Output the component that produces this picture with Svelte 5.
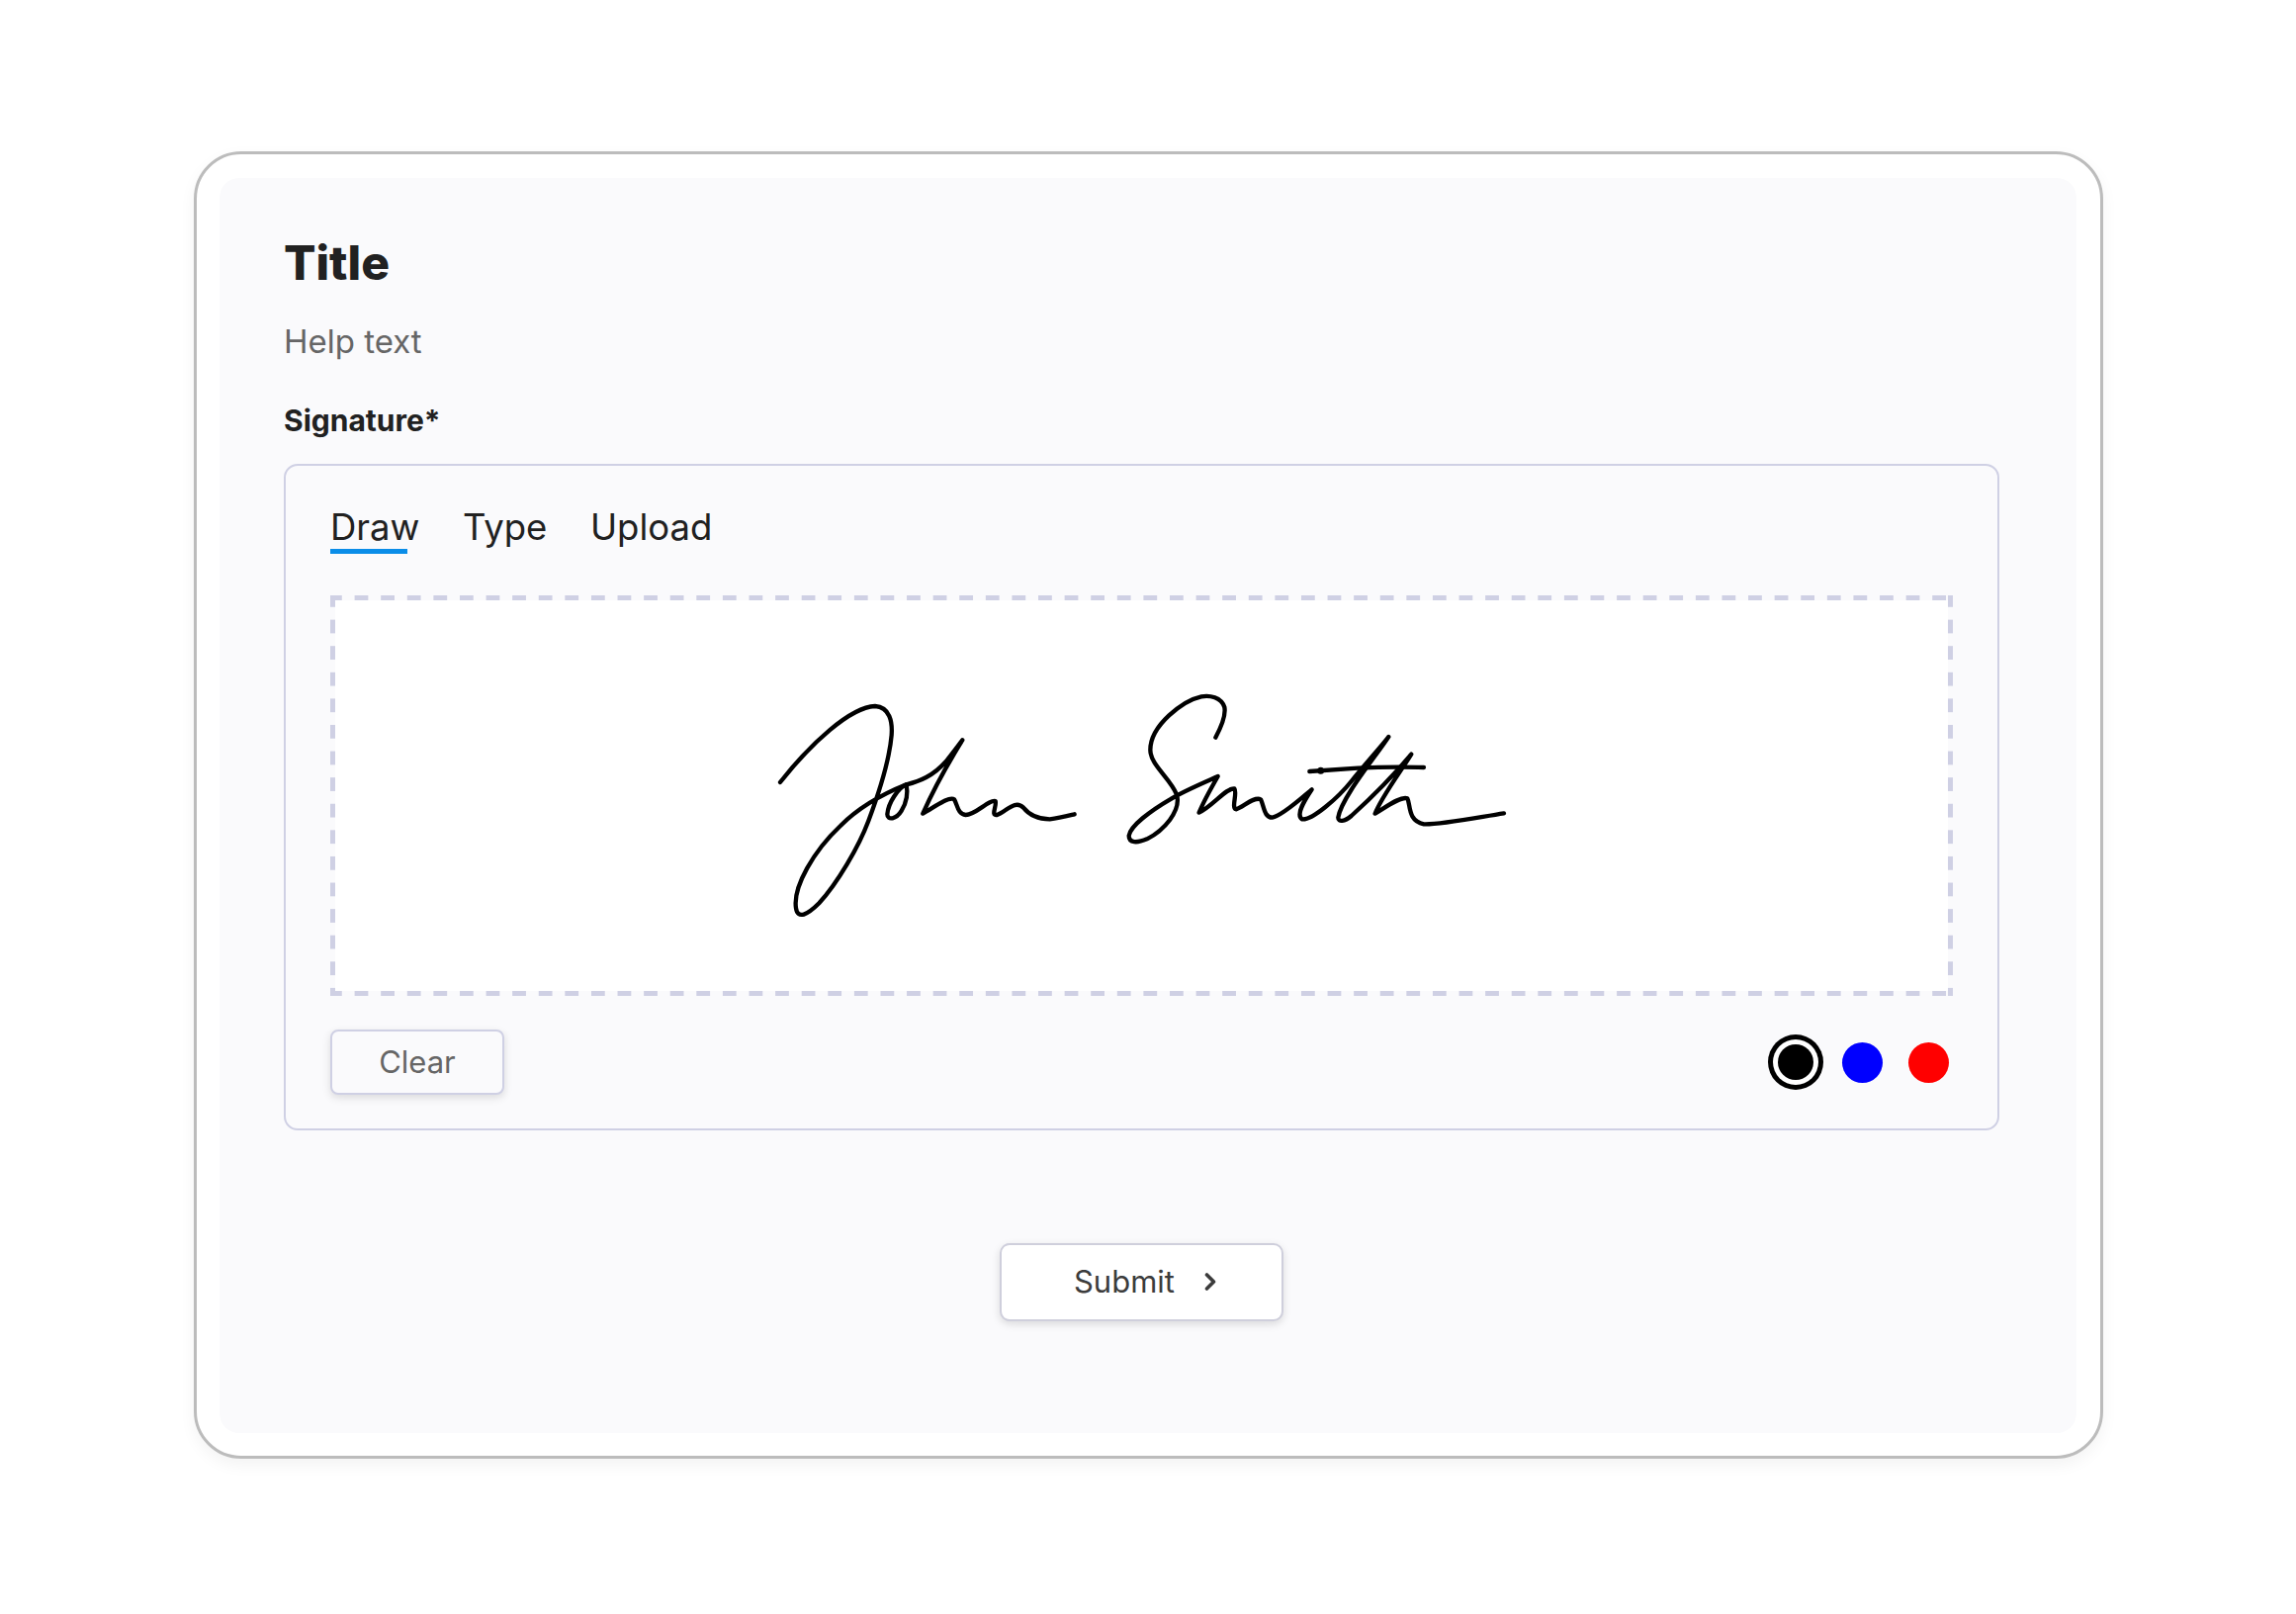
<script>
    const tabs = ["Draw", "Type", "Upload"];
    const colors = ["#000000", "#0000ff", "#ff0000"];

    let activeTab = $state("Draw");
    let ink = $state("#000000");
</script>

<div class="page">
    <div class="frame">
        <div class="panel">
            <h1>Title</h1>
            <p class="help">Help text</p>
            <div class="label">Signature*</div>

            <div class="box">
                <div class="tabs">
                    {#each tabs as tab}
                        <button class="tab" class:active={activeTab === tab} onclick={() => (activeTab = tab)}>{tab}</button>
                    {/each}
                </div>

                <div class="dashed">
                    <div class="canvas">
                        <svg viewBox="339 607 1631 395" fill="none" stroke={ink} stroke-width="13" stroke-linecap="round" stroke-linejoin="round">
                            <g transform="translate(760 680) scale(.3333)">
                                <path d="M87 333C180 215 300 105 375 102C420 105 428 150 425 190C418 270 385 370 355 450C325 530 260 640 205 700C170 735 140 750 135 715C125 650 190 540 270 465C340 395 420 360 470 340C510 330 550 315 590 270C610 245 625 225 640 205C600 270 550 360 520 428C560 405 600 375 615 385C625 400 625 430 650 432C680 432 720 385 740 390C745 405 725 435 745 432C775 420 800 385 825 410C845 435 870 445 905 445C935 442 960 435 980 430"/>
                                <path d="M470 340C445 350 415 395 412 430C412 450 440 445 455 420C470 395 475 365 470 340"/>
                            </g>
                            <g transform="translate(1140 680) scale(.3333)">
                                <path d="M268 197C285 165 300 130 295 105C285 75 250 68 225 73C170 85 70 160 70 235C70 280 130 320 150 370C165 420 110 480 60 505C30 518 5 518 5 495C10 465 70 420 130 385C170 360 230 335 275 315C255 350 230 395 218 425C260 405 300 350 325 352C335 365 315 410 330 415C350 410 385 375 405 385C415 405 415 440 440 440C470 435 530 380 560 355C540 385 510 430 530 445C560 450 640 380 680 330C720 280 770 225 793 195C750 260 650 380 640 440C640 455 660 452 680 435C730 390 810 310 862 248C830 300 770 380 752 428C790 405 830 375 850 382C860 400 850 450 900 460C950 462 1060 440 1143 427"/>
                                <path d="M553 300L700 290C800 285 850 287 900 288"/>
                                <circle cx="587" cy="298" r="4"/>
                            </g>
                        </svg>
                    </div>
                </div>

                <div class="controls">
                    <button class="clear">Clear</button>
                    <div class="swatches">
                        {#each colors as color}
                            <button class="swatch" class:selected={ink === color} style="background: {color}" aria-label={color} onclick={() => (ink = color)}></button>
                        {/each}
                    </div>
                </div>
            </div>

            <div class="actions">
                <button class="submit">
                    Submit
                    <svg width="12" height="18" viewBox="0 0 12 18" fill="none" stroke="#3c3c3c" stroke-width="3.6" stroke-linecap="round" stroke-linejoin="round">
                        <path d="M2.5 2L9.5 9L2.5 16"/>
                    </svg>
                </button>
            </div>
        </div>
    </div>
</div>

<style>
    :global(body) {
        margin: 0;
        background: #fff;
    }

    .page {
        height: 1632px;
        padding: 153px 0 0 196px;
        box-sizing: border-box;
        font-family: Inter, "Noto Sans", sans-serif;
    }

    .frame {
        width: 1931px;
        height: 1322px;
        box-sizing: border-box;
        padding: 24px 24px 23px 23px;
        border: 3px solid #bcbcbc;
        border-radius: 48px;
        background: #fff;
        box-shadow: 0 6px 16px rgba(0, 0, 0, 0.05);
    }

    .panel {
        height: 100%;
        box-sizing: border-box;
        padding: 56px 78px 0 65px;
        border-radius: 20px;
        background: #fafafc;
    }

    h1 {
        margin: 0;
        font-size: 48px;
        line-height: 60px;
        font-weight: 800;
        color: #212121;
    }

    .help {
        margin: 29px 0 0;
        font-size: 33px;
        line-height: 40px;
        color: #666;
    }

    .label {
        margin-top: 42px;
        font-size: 30px;
        line-height: 36px;
        font-weight: 700;
        color: #212121;
    }

    .box {
        margin-top: 26px;
        height: 674px;
        box-sizing: border-box;
        padding: 40px 45px 0;
        border: 2px solid #cfd0e4;
        border-radius: 14px;
    }

    .tabs {
        display: flex;
        align-items: flex-start;
        gap: 43.5px;
        height: 91px;
    }

    .tab {
        padding: 0;
        border: 0;
        background: none;
        font: inherit;
        font-size: 36.5px;
        line-height: 44px;
        color: #212121;
        cursor: pointer;
    }

    .tab.active::after {
        content: "";
        display: block;
        width: 78px;
        height: 5px;
        background: #0a8de8;
    }

    .dashed {
        height: 405px;
        box-sizing: border-box;
        padding: 5px;
        background:
            linear-gradient(90deg, #cfd0e4 50%, transparent 50%) -2px 0 / 26.6px 5px repeat-x,
            linear-gradient(90deg, #cfd0e4 50%, transparent 50%) -2px 100% / 26.6px 5px repeat-x,
            linear-gradient(#cfd0e4 50%, transparent 50%) 0 -2px / 5px 26.6px repeat-y,
            linear-gradient(#cfd0e4 50%, transparent 50%) 100% -2px / 5px 26.6px repeat-y;
    }

    .canvas {
        height: 100%;
        background: #fff;
    }

    .canvas svg {
        display: block;
        width: 100%;
        height: 100%;
    }

    .controls {
        display: flex;
        justify-content: space-between;
        align-items: center;
        margin-top: 34px;
        padding-right: 4px;
    }

    .clear {
        width: 176px;
        height: 66px;
        padding: 0 0 2px;
        border: 2px solid #cfd0e4;
        border-radius: 8px;
        background: #fafafc;
        box-shadow: 0 3px 8px rgba(0, 0, 0, 0.13);
        font: inherit;
        font-size: 31px;
        color: #666;
        cursor: pointer;
    }

    .swatches {
        display: flex;
        gap: 26px;
    }

    .swatch {
        width: 41px;
        height: 41px;
        padding: 0;
        border: 0;
        border-radius: 50%;
        cursor: pointer;
    }

    .swatch.selected {
        width: 36px;
        height: 36px;
        margin: 2.5px 3.5px 2.5px 2.5px;
        box-shadow: 0 0 0 5px #fff, 0 0 0 10px #000;
    }

    .actions {
        display: flex;
        justify-content: center;
        margin-top: 114px;
    }

    .submit {
        display: flex;
        justify-content: center;
        align-items: center;
        gap: 30px;
        width: 287px;
        height: 79px;
        padding: 0 0 2px 7px;
        border: 2px solid #cfcfdc;
        border-radius: 10px;
        background: #fff;
        box-shadow: 0 3px 8px rgba(0, 0, 0, 0.13);
        font: inherit;
        font-size: 31px;
        color: #3c3c3c;
        cursor: pointer;
    }
</style>
